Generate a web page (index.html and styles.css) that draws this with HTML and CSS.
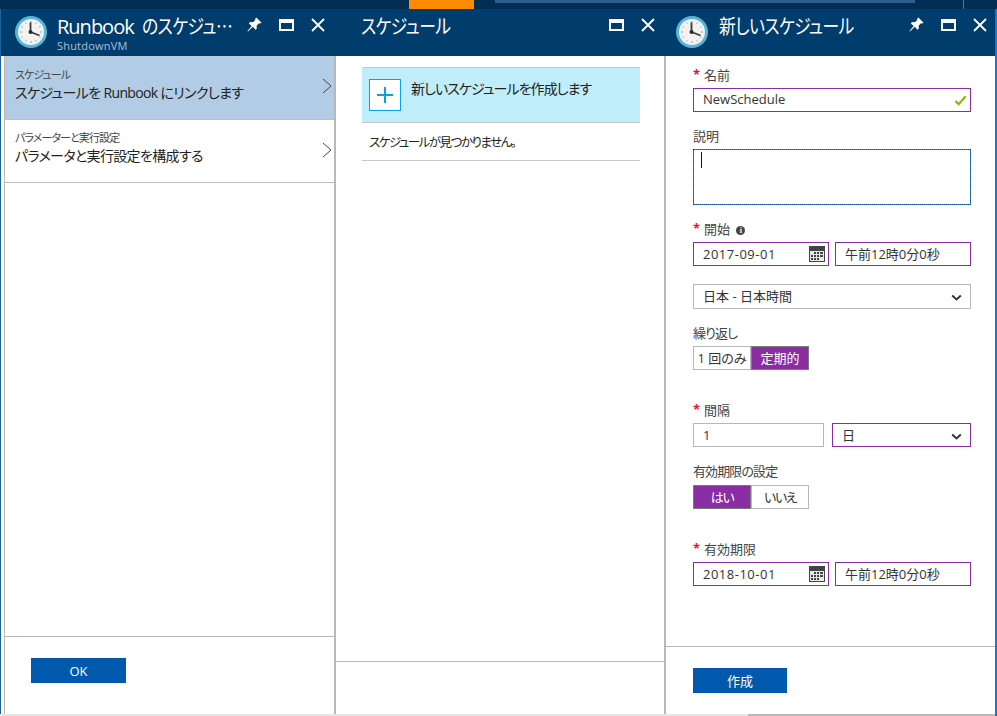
FILE: index.html
```html
<!DOCTYPE html>
<html lang="ja">
<head>
    <meta charset="UTF-8">
    <meta name="viewport" content="width=device-width, initial-scale=1.0">
    <title>新しいスケジュール</title>
    <link rel="stylesheet" href="styles.css">
</head>
<body>

    <!-- shared icons -->
    <svg class="defs" aria-hidden="true">
        <symbol id="clock" viewBox="0 0 32 32">
            <circle cx="16" cy="16" r="16" fill="#59b4d9"/>
            <circle cx="16" cy="16" r="13" fill="#f2f2f0"/>
            <path d="M16 5v2M16 25v2M5 16h2M25 16h2M10.5 6.5l.7 1.2M21.500 6.500l-.7 1.200M6.500 10.500l1.200.7M25.500 10.500l-1.200.7M6.500 21.500l1.200-.7M25.500 21.500l-1.200-.7M10.500 25.500l.7-1.200M21.500 25.500l-.7-1.200" stroke="#9a9a9a" stroke-width="1"/>
            <path d="M15.500 6.500V16l9 3.500" fill="none" stroke="#3a3a3a" stroke-width="1.800"/>
            <circle cx="15.500" cy="16" r="2" fill="#2a2a2a"/>
        </symbol>
        <symbol id="pin" viewBox="0 0 16 16">
            <path d="M10 .5l5.500 5.500-1.500 1-1.200-.4-2.600 2.700.3 2.900-1.400 1.300-2.900-3L1 15.500l-.5-.5 4.500-5.300-3-2.900 1.300-1.400 2.900.3 2.700-2.600L8.500 2z" fill="#fff"/>
        </symbol>
        <symbol id="calendar" viewBox="0 0 16 16">
            <path d="M0 0h16v16H0z" fill="#444"/>
            <path d="M1 5h14v10H1z" fill="#e8e8e8"/>
            <path d="M5 6h2v2H5zM8 6h2v2H8zM11 6h3v2h-3zM2 9h2v2H2zM5 9h2v2H5zM8 9h2v2H8zM11 9h3v2h-3zM2 12h2v2H2zM5 12h2v2H5zM8 12h2v2H8z" fill="#444"/>
        </symbol>
        <symbol id="chevron" viewBox="0 0 14 8">
            <path d="M1.500 1.500L7 6.500l5.500-5" fill="none" stroke="#333" stroke-width="2.400"/>
        </symbol>
    </svg>

    <div class="topbar">
        <span class="topbar-tab"></span>
        <span class="topbar-track"></span>
        <span class="topbar-line"></span>
    </div>

    <div class="blades">
        <div class="gutter"></div>

        <!-- Runbook blade -->
        <section class="blade blade-first">
            <header class="blade-header">
                <svg class="blade-icon"><use href="#clock"/></svg>
                <div class="blade-title">
                    <h2>Runbook <span class="kana">のスケジュ…</span></h2>
                    <p>ShutdownVM</p>
                </div>
                <div class="blade-actions">
                    <svg class="action action-pin"><use href="#pin"/></svg>
                    <span class="action-max"></span>
                    <svg class="action" viewBox="0 0 14 14"><path d="M1 1l12 12M13 1L1 13" stroke="#fff" stroke-width="1.800"/></svg>
                </div>
            </header>
            <div class="blade-body">
                <a class="nav-row nav-row-active">
                    <small>スケジュール</small>
                    <span>スケジュールを Runbook にリンクします</span>
                    <svg class="nav-arrow" viewBox="0 0 10 16"><path d="M1 1l8 7-8 7" fill="none" stroke="#444" stroke-width="1"/></svg>
                </a>
                <a class="nav-row">
                    <small>パラメーターと実行設定</small>
                    <span>パラメータと実行設定を構成する</span>
                    <svg class="nav-arrow" viewBox="0 0 10 16"><path d="M1 1l8 7-8 7" fill="none" stroke="#444" stroke-width="1"/></svg>
                </a>
            </div>
            <footer class="blade-footer footer-first">
                <button class="btn btn-ok">OK</button>
            </footer>
        </section>

        <!-- schedule list blade -->
        <section class="blade blade-second">
            <header class="blade-header">
                <div class="blade-title blade-title-plain">
                    <h2><span class="kana">スケジュール</span></h2>
                </div>
                <div class="blade-actions">
                    <span class="action-max"></span>
                    <svg class="action" viewBox="0 0 14 14"><path d="M1 1l12 12M13 1L1 13" stroke="#fff" stroke-width="1.800"/></svg>
                </div>
            </header>
            <div class="blade-body list-body">
                <div class="add-row">
                    <span class="add-box">
                        <svg viewBox="0 0 16 16"><path d="M8 0v16M0 8h16" stroke="#00a4ef" stroke-width="2"/></svg>
                    </span>
                    <span class="add-text">新しいスケジュールを作成します</span>
                </div>
                <div class="empty-row">スケジュールが見つかりません。</div>
            </div>
            <footer class="blade-footer footer-second"></footer>
        </section>

        <!-- new schedule blade -->
        <section class="blade blade-third">
            <header class="blade-header">
                <svg class="blade-icon"><use href="#clock"/></svg>
                <div class="blade-title">
                    <h2><span class="kana">新しいスケジュール</span></h2>
                </div>
                <div class="blade-actions">
                    <svg class="action action-pin"><use href="#pin"/></svg>
                    <span class="action-max"></span>
                    <svg class="action" viewBox="0 0 14 14"><path d="M1 1l12 12M13 1L1 13" stroke="#fff" stroke-width="1.800"/></svg>
                </div>
            </header>
            <div class="blade-body form-body">
                <div class="field field-top">
                    <label class="req">名前</label>
                    <div class="box box-edit">NewSchedule
                        <svg class="check" viewBox="0 0 14 12"><path d="M1.500 6.500L5 10l7.500-8.500" fill="none" stroke="#7fba00" stroke-width="2.400"/></svg>
                    </div>
                </div>
                <div class="field">
                    <label>説明</label>
                    <div class="box box-focus"><span class="caret"></span></div>
                </div>
                <div class="field">
                    <label class="req">開始 <i class="info">i</i></label>
                    <div class="pair">
                        <div class="box box-edit box-date">2017-09-01<svg class="cal"><use href="#calendar"/></svg></div>
                        <div class="box box-edit box-time">午前12時0分0秒</div>
                    </div>
                </div>
                <div class="box box-select">日本 - 日本時間<svg class="chev"><use href="#chevron"/></svg></div>
                <div class="field">
                    <label class="label-tight">繰り返し</label>
                    <div class="toggle">
                        <span>1 回のみ</span>
                        <span class="on">定期的</span>
                    </div>
                </div>
                <div class="field field-gap">
                    <label class="req">間隔</label>
                    <div class="pair pair-interval">
                        <div class="box box-count">1</div>
                        <div class="box box-edit box-unit">日<svg class="chev"><use href="#chevron"/></svg></div>
                    </div>
                </div>
                <div class="field">
                    <label class="label-tight label-loose">有効期限の設定</label>
                    <div class="toggle toggle-kana">
                        <span class="on">はい</span>
                        <span>いいえ</span>
                    </div>
                </div>
                <div class="field field-gap">
                    <label class="req">有効期限</label>
                    <div class="pair">
                        <div class="box box-edit box-date">2018-10-01<svg class="cal"><use href="#calendar"/></svg></div>
                        <div class="box box-edit box-time">午前12時0分0秒</div>
                    </div>
                </div>
            </div>
            <footer class="blade-footer footer-third">
                <button class="btn btn-create">作成</button>
            </footer>
        </section>
    </div>

    <div class="bottombar">
        <span class="bottombar-light"></span>
        <span class="bottombar-dark"></span>
        <span class="bottombar-edge"></span>
    </div>

</body>
</html>
```

FILE: styles.css
```css
/* General body styling */
html, body {
    height: 100%;
}

body {
    margin: 0;
    height: 716px;
    overflow: hidden;
    display: flex;
    flex-direction: column;
    background-color: #fff;
    color: #333;
    font-family: "Open Sans", "Noto Sans CJK JP", sans-serif;
    font-size: 13px;
    font-feature-settings: "palt"; /* kana set tight, as in the portal font */
}

.defs {
    display: none;
}

/* Portal bar behind the blades */
.topbar {
    height: 9px;
    flex: none;
    display: flex;
    background-color: #032d52;
}

.topbar-tab {
    width: 65px;
    margin-left: 409px;
    background-color: #ff8c00;
}

.topbar-track {
    width: 420px;
    height: 3px;
    margin-left: 21px;
    background-color: #2f5f8c;
}

.topbar-line {
    width: 1px;
    margin-left: 48px;
    background-color: #5a7590;
}

/* Blades */
.blades {
    flex: 1;
    min-height: 0;
    display: flex;
}

.gutter {
    width: 4px;
    flex: none;
    border-left: 1px solid #1b639f;
    box-sizing: border-box;
    background: linear-gradient(#003c6c 47px, #fff 47px);
}

.blade {
    flex: none;
    display: flex;
    flex-direction: column;
    box-sizing: border-box;
    border-color: #b8b8b8;
    border-style: solid;
    border-width: 0;
}

.blade-first {
    width: 332px;
    border-left-width: 1px;
    border-right-width: 2px;
}

.blade-second {
    width: 329px;
    border-right-width: 1px;
}

.blade-third {
    width: 332px;
    border-left-width: 1px;
    border-right: 2px solid #1878d0;
}

.blade-header {
    height: 47px;
    flex: none;
    display: flex;
    background-color: #003c6c;
    color: #fff;
    margin: 0 -2px 0 -1px;
}

.blade-second .blade-header {
    margin: 0 -1px 0 0;
}

.blade-third .blade-header {
    margin: 0 0 0 -1px;
}

.blade-icon {
    width: 32px;
    height: 32px;
    flex: none;
    margin: 7px 0 0 11px;
}

.blade-title {
    flex: 1;
    min-width: 0;
    margin-left: 11px;
}

.blade-first .blade-title {
    margin-left: 10px;
}

.blade-title h2 {
    margin: 4px 0 0;
    font-size: 20px;
    font-weight: 400;
    line-height: 26px;
    letter-spacing: -1px;
    word-spacing: 4px;
    white-space: nowrap;
}

/* narrow kana, the headers set them condensed */
.kana {
    display: inline-block;
    font-family: "Noto Sans CJK JP", sans-serif;
    letter-spacing: -0.6px;
    transform: scaleX(0.84);
    transform-origin: left;
}

.blade-title p {
    margin: 0;
    font-size: 11px;
    line-height: 11px;
    letter-spacing: 0.2px;
    color: #a9c0d4;
}

.blade-title-plain {
    margin-left: 25px;
}

.blade-actions {
    flex: none;
    display: flex;
    align-items: flex-start;
    padding: 9px 11px 0 0;
}

.blade-second .blade-actions {
    padding-right: 10px;
}

.blade-third .blade-actions {
    padding-right: 8px;
}

.action {
    width: 14px;
    height: 14px;
    margin-left: 17px;
}

.action-pin {
    width: 15px;
    height: 15px;
    margin-top: -1px;
}

.action-max {
    width: 15px;
    height: 12px;
    margin: 1px 0 0 17px;
    box-sizing: border-box;
    border: 2px solid #fff;
    border-top-width: 4px;
}

.blade-body {
    flex: 1;
    min-height: 0;
}

.blade-footer {
    flex: none;
    box-sizing: border-box;
    border-top: 1px solid #b8b8b8;
}

.footer-first {
    height: 78px;
    padding: 21px 0 0 26px;
}

.footer-second {
    height: 53px;
}

.footer-third {
    height: 68px;
    padding: 21px 0 0 27px;
}

/* Navigation rows */
.nav-row {
    display: block;
    height: 63px;
    box-sizing: border-box;
    padding: 11px 0 0 10px;
    border-bottom: 1px solid #bdbdbd;
    position: relative;
}

.nav-row + .nav-row {
    height: 63px;
    padding-top: 10px;
}

.nav-row-active {
    height: 64px;
    background-color: #b1cce4;
}

.nav-row small {
    display: block;
    font-size: 11px;
    line-height: 16px;
    letter-spacing: -0.9px;
    color: #444;
}

.nav-row span {
    display: block;
    font-size: 14px;
    line-height: 20px;
    letter-spacing: -0.65px;
    color: #222;
}

.nav-arrow {
    position: absolute;
    right: 2px;
    top: 22px;
    width: 10px;
    height: 16px;
}

/* Schedule list */
.list-body {
    padding: 11px 24px 0 26px;
}

.add-row {
    height: 56px;
    box-sizing: border-box;
    display: flex;
    padding: 11px 0 0 7px;
    background-color: #bfedf9;
    border-top: 1px solid #c8c8c8;
    border-bottom: 1px solid #c8c8c8;
}

.add-box {
    width: 32px;
    height: 32px;
    box-sizing: border-box;
    border: 1px solid #00a4ef;
    background-color: #fff;
    display: flex;
    align-items: center;
    justify-content: center;
}

.add-box svg {
    width: 16px;
    height: 16px;
}

.add-text {
    margin: -1px 0 0 10px;
    font-size: 14px;
    line-height: 22px;
    letter-spacing: -0.95px;
    color: #222;
}

.empty-row {
    height: 38px;
    box-sizing: border-box;
    padding: 10px 0 0 7px;
    font-size: 12.5px;
    line-height: 20px;
    letter-spacing: -1.5px;
    color: #222;
    border-bottom: 1px solid #c8c8c8;
}

/* Form */
.form-body {
    padding: 0 24px 0 27px;
}

.field {
    margin-top: 15px;
}

.field-top {
    margin-top: 10px;
}

.field-gap {
    margin-top: 31px;
}

label {
    display: block;
    height: 18px;
    margin-bottom: 4px;
    font-size: 13px;
    line-height: 18px;
    color: #444;
}

.label-tight {
    letter-spacing: -0.9px;
}

.label-loose {
    margin-bottom: 5px;
}

.req {
    position: relative;
    padding-left: 11px;
}

.req::before {
    content: "*";
    position: absolute;
    left: 0;
    top: -1px;
    color: #f01030;
    font-weight: 700;
}

.info {
    display: inline-block;
    width: 9px;
    height: 9px;
    margin-left: 3px;
    border-radius: 50%;
    background-color: #444;
    color: #fff;
    font: 700 8px/9px "Liberation Serif", serif;
    text-align: center;
    vertical-align: 1px;
}

.box {
    height: 24px;
    box-sizing: border-box;
    padding-left: 9px;
    border: 1px solid #b8b8b8;
    font-size: 13px;
    line-height: 21px;
    color: #333;
    position: relative;
    background-color: #fff;
}

.box-edit {
    border-color: #8a2da5;
}

.box-focus {
    height: 56px;
    border: 1px solid #00a4ef;
    outline: 1px dotted #034f8a;
    outline-offset: -1px;
}

.caret {
    display: block;
    width: 1px;
    height: 16px;
    margin: 2px 0 0 -2px;
    background-color: #111;
}

.check {
    position: absolute;
    right: 3px;
    top: 6px;
    width: 13px;
    height: 11px;
}

.pair {
    display: flex;
    gap: 6px;
}

.pair .box {
    line-height: 23px;
}

.pair-interval {
    gap: 8px;
}

.box-date,
.box-time {
    width: 136px;
}

.box-date {
    letter-spacing: 0.5px;
}

.box-count {
    width: 131px;
}

.box-unit {
    width: 139px;
}

.box-select {
    height: 25px;
    margin-top: 18px;
    line-height: 22px;
}

.cal {
    position: absolute;
    right: 3px;
    top: 3px;
    width: 16px;
    height: 16px;
}

.chev {
    position: absolute;
    right: 8px;
    top: 9px;
    width: 11px;
    height: 7px;
}

/* Two state toggle */
.toggle {
    display: flex;
    width: 116px;
    height: 24px;
}

.toggle span {
    flex: 1;
    box-sizing: border-box;
    border: 1px solid #b8b8b8;
    font-size: 13px;
    line-height: 22px;
    text-align: center;
    color: #333;
    white-space: nowrap;
}

.toggle-kana span {
    letter-spacing: -1.5px;
}

.toggle .on {
    background-color: #8a2da5;
    border-color: #7a7a7a;
    color: #fff;
}

/* Buttons */
.btn {
    display: block;
    height: 25px;
    padding: 0;
    border: none;
    background-color: #0059ad;
    color: #fff;
    font-family: inherit;
    font-size: 13px;
}

.btn-ok {
    width: 95px;
}

.btn-create {
    width: 94px;
}

/* Strip under the blades */
.bottombar {
    height: 2px;
    flex: none;
    display: flex;
}

.bottombar-light {
    width: 748px;
    background-color: #e6e6e6;
}

.bottombar-dark {
    flex: 1;
    background-color: #b8b8b8;
}

.bottombar-edge {
    width: 2px;
    background-color: #1878d0;
}
```
